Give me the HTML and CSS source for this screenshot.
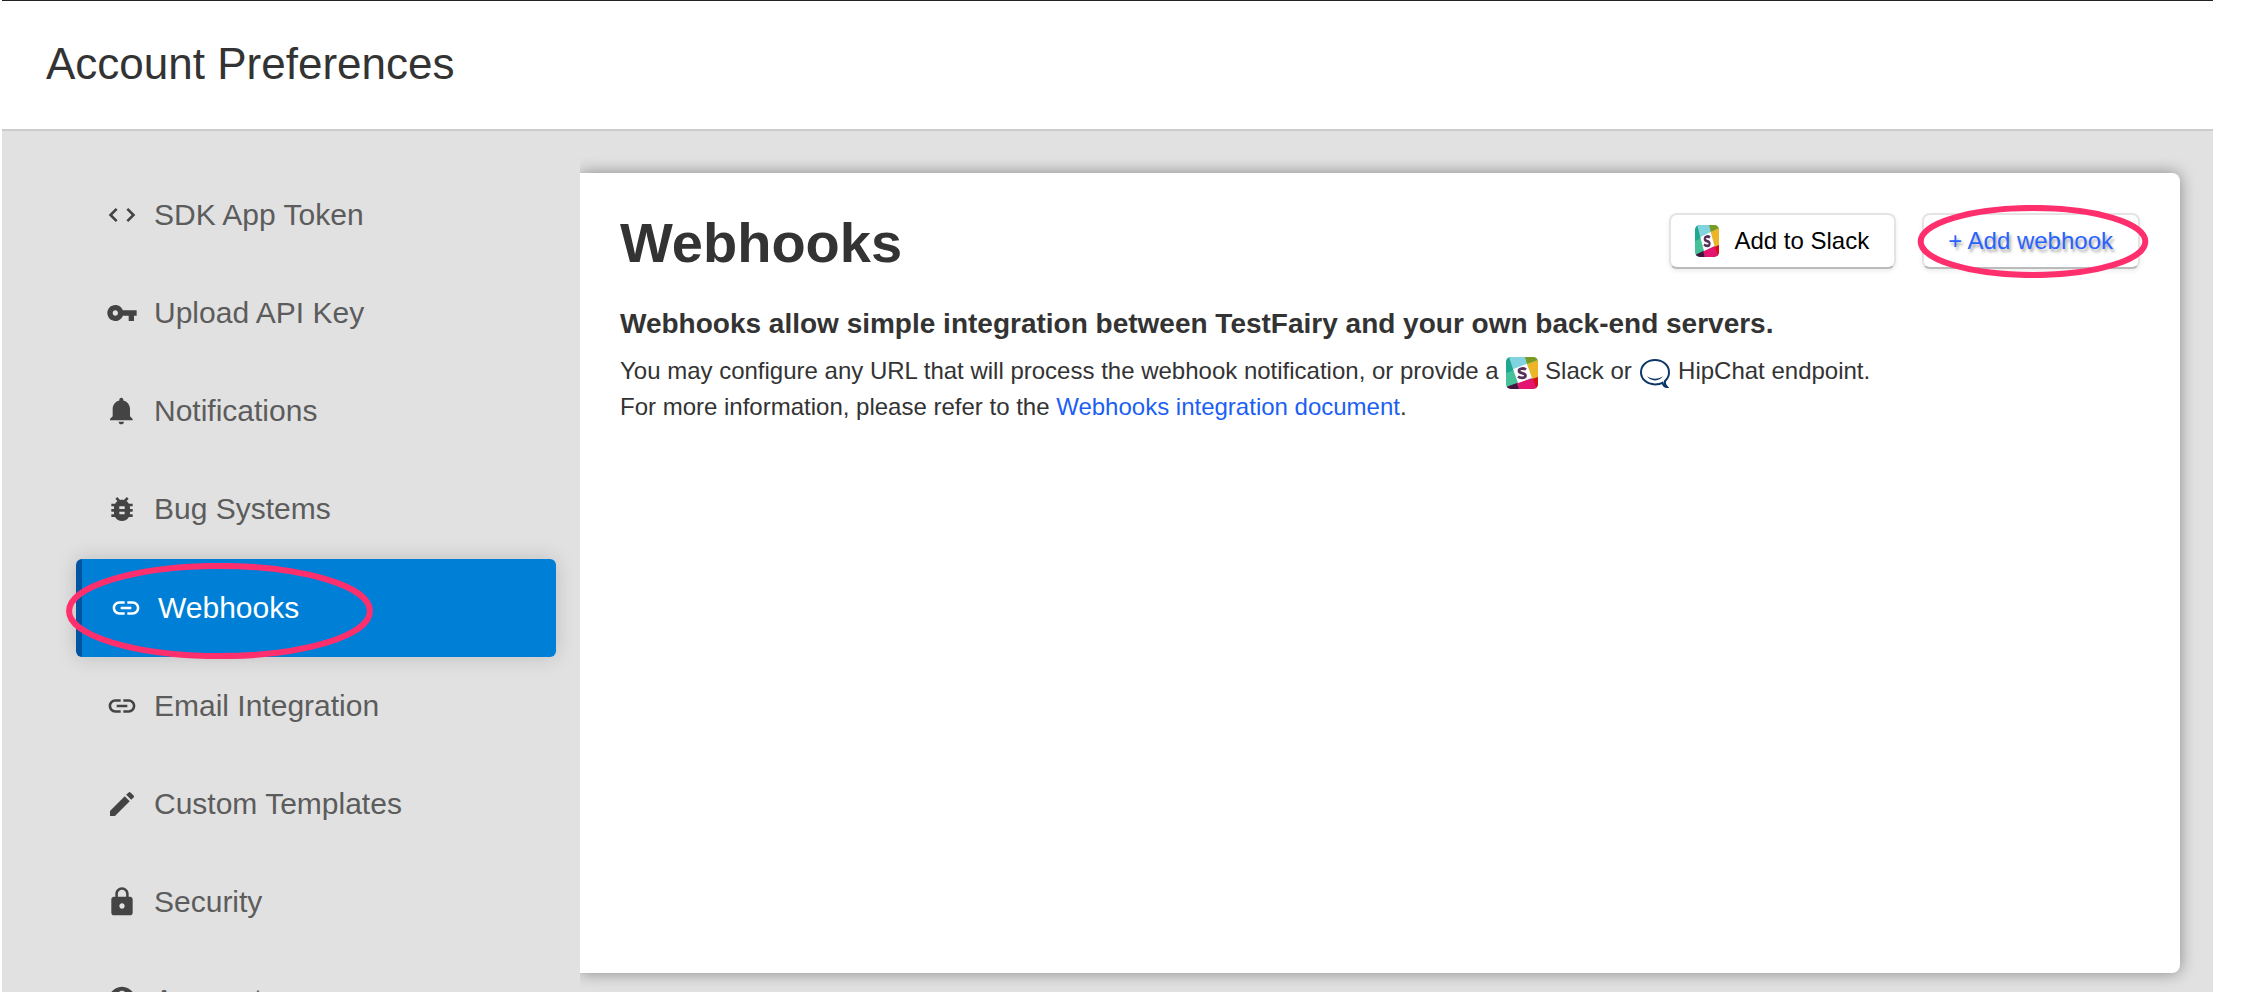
FILE: index.html
```html
<!DOCTYPE html>
<html lang="en">
<head>
<meta charset="utf-8">
<title>Account Preferences</title>
<link rel="stylesheet" href="styles.css">
</head>
<body>
<svg class="sprite" aria-hidden="true">
  <symbol id="slack" viewBox="0 0 32 32" preserveAspectRatio="none">
    <rect width="32" height="32" fill="#46c19a"/>
    <path d="M0 0H4L9 13 0 16Z" fill="#1fa88f"/>
    <path d="M3 0H19L22 7 7 12Z" fill="#82d3e0"/>
    <path d="M19 0H32V3L21 7Z" fill="#7a9a22"/>
    <path d="M21 7L32 3V20L26 22Z" fill="#ecb427"/>
    <path d="M26 22L32 20V32H29Z" fill="#d90d17"/>
    <path d="M11 26L26 21 31 32H13Z" fill="#e5156f"/>
    <path d="M0 30L11 26 13 32H0Z" fill="#44143f"/>
    <path d="M7 12L21 7 26 21 12 26Z" fill="#fff"/>
    <path d="M20 12.500C18 11 13 11 13 14 13 17 19.500 15.300 19.500 18.500 19.500 21.500 14.500 21.500 12 19.500" fill="none" stroke="#57305a" stroke-width="2.800"/>
  </symbol>
  <symbol id="link" viewBox="0 0 24 24"><path d="M3.900 12c0-1.710 1.390-3.100 3.100-3.100h4V7H7c-2.760 0-5 2.240-5 5s2.240 5 5 5h4v-1.900H7c-1.710 0-3.100-1.390-3.100-3.100zM8 13h8v-2H8v2zm9-6h-4v1.900h4c1.710 0 3.100 1.390 3.100 3.100s-1.390 3.100-3.100 3.100h-4V17h4c2.760 0 5-2.240 5-5s-2.240-5-5-5z"/></symbol>
</svg>
<div class="page">
  <header class="header"><h1 class="header-title">Account Preferences</h1></header>
  <div class="layout">
    <nav class="nav" aria-label="Account">
      <a class="nav-item" href="#sdk"><svg class="nav-icon" viewBox="0 0 24 24"><path d="M8.700 15.900L4.800 12l3.900-3.900L7.300 6.700 2 12l5.300 5.300zm6.600 0l3.900-3.900-3.900-3.900 1.400-1.400L22 12l-5.300 5.300z"/></svg>SDK App Token</a>
      <a class="nav-item" href="#key"><svg class="nav-icon" viewBox="0 0 24 24"><path d="M12.650 10C11.830 7.670 9.610 6 7 6c-3.310 0-6 2.690-6 6s2.690 6 6 6c2.610 0 4.830-1.670 5.650-4H17v4h4v-4h2v-4H12.650zM7 14c-1.100 0-2-.900-2-2s.900-2 2-2 2 .900 2 2-.900 2-2 2z"/></svg>Upload API Key</a>
      <a class="nav-item" href="#notifications"><svg class="nav-icon" viewBox="0 0 24 24"><path d="M11.500 22c1.100 0 2-.900 2-2h-4c0 1.100.900 2 2 2zm6.500-6v-5.500c0-3.070-2.130-5.640-5-6.320V3.500c0-.830-.670-1.500-1.500-1.500S10 2.670 10 3.500v.680c-2.870.680-5 3.250-5 6.320V16l-2 2v1h17v-1l-2-2z"/></svg>Notifications</a>
      <a class="nav-item" href="#bugs"><svg class="nav-icon" viewBox="0 0 24 24"><path d="M20 8h-2.810c-.450-.780-1.070-1.450-1.820-1.960L17 4.410 15.590 3l-2.170 2.170C12.960 5.060 12.490 5 12 5s-.960.060-1.410.170L8.410 3 7 4.410l1.620 1.630C7.880 6.550 7.260 7.220 6.810 8H4v2h2.090c-.050.330-.090.660-.090 1v1H4v2h2v1c0 .340.040.670.090 1H4v2h2.810c1.040 1.790 2.970 3 5.190 3s4.150-1.210 5.190-3H20v-2h-2.090c.050-.330.090-.660.090-1v-1h2v-2h-2v-1c0-.340-.040-.670-.090-1H20V8zm-6 8h-4v-2h4v2zm0-4h-4v-2h4v2z"/></svg>Bug Systems</a>
      <a class="nav-item nav-item-active" href="#webhooks" aria-current="page"><svg class="nav-icon"><use href="#link"/></svg>Webhooks
        <svg class="ring ring-nav" aria-hidden="true"><ellipse cx="50%" cy="50%" rx="49%" ry="47%"/></svg></a>
      <a class="nav-item" href="#email"><svg class="nav-icon"><use href="#link"/></svg>Email Integration</a>
      <a class="nav-item" href="#templates"><svg class="nav-icon" viewBox="0 0 24 24"><path d="M3 17.250V21h3.750L17.810 9.940l-3.750-3.750L3 17.250zM20.710 7.040a.996.996 0 0 0 0-1.410l-2.340-2.340a.996.996 0 0 0-1.410 0l-1.830 1.830 3.750 3.750 1.830-1.830z"/></svg>Custom Templates</a>
      <a class="nav-item" href="#security"><svg class="nav-icon" viewBox="0 0 24 24"><path d="M18 8h-1V6c0-2.760-2.240-5-5-5S7 3.240 7 6v2H6c-1.100 0-2 .900-2 2v10c0 1.100.900 2 2 2h12c1.100 0 2-.900 2-2V10c0-1.100-.900-2-2-2zm-6 9c-1.100 0-2-.900-2-2s.900-2 2-2 2 .900 2 2-.900 2-2 2zm3.100-9H8.900V6c0-1.710 1.390-3.100 3.100-3.100 1.710 0 3.100 1.390 3.100 3.100v2z"/></svg>Security</a>
      <a class="nav-item" href="#account"><svg class="nav-icon" viewBox="0 0 24 24"><path d="M12 2C6.480 2 2 6.480 2 12s4.480 10 10 10 10-4.480 10-10S17.520 2 12 2zm0 3c1.660 0 3 1.340 3 3s-1.340 3-3 3-3-1.340-3-3 1.340-3 3-3z"/></svg>Account</a>
    </nav>
    <main class="panel">
      <div class="panel-head">
        <h2 class="panel-title">Webhooks</h2>
        <div class="actions">
          <button class="btn" type="button"><svg class="btn-slack" aria-hidden="true"><use href="#slack"/></svg>Add to Slack</button>
          <button class="btn btn-link" type="button">+ Add webhook
            <svg class="ring ring-btn" aria-hidden="true"><ellipse cx="50%" cy="50%" rx="48%" ry="46%"/></svg></button>
        </div>
      </div>
      <h3 class="lead">Webhooks allow simple integration between TestFairy and your own back-end servers.</h3>
      <p class="copy">You may configure any URL that will process the webhook notification, or provide a <svg class="inline-icon" aria-hidden="true"><use href="#slack"/></svg> Slack or <svg class="inline-icon inline-chat" viewBox="0 0 32 32" aria-hidden="true"><path d="M23.500 25.800C21.500 27 18.800 27.400 16 27.400 8 27.400 2 22 2 15.200S8 3 16 3 30 8.400 30 15.200C30 18.700 28.500 21.700 26 24 25.500 26 26.300 28.300 28 30 26 30 24.200 28.400 23.500 25.800Z"/><path class="smile" d="M8 19.300C12.500 22.500 19.500 22.500 24 19.300 20.500 24.800 11.500 24.800 8 19.300Z"/></svg> HipChat endpoint.<br>For more information, please refer to the <a class="link" href="#docs">Webhooks integration document</a>.</p>
    </main>
  </div>
</div>
</body>
</html>
```
FILE: styles.css
```css
* { box-sizing: border-box; }
html { background: #fff; }
body {
  margin: 0;
  height: 100vh;
  overflow: hidden;
  font-family: "Liberation Sans", Arial, sans-serif;
  color: #333;
}
.sprite { position: absolute; width: 0; height: 0; }
.page {
  display: flex;
  flex-direction: column;
  min-height: 100vh;
  margin: 0 41px 0 2px;
  border-top: 1px solid #222;
}
.header {
  padding: 38px 44px 40px;
  border-bottom: 2px solid #ccc;
}
.header-title {
  margin: 0;
  font-size: 44px;
  line-height: 50px;
  font-weight: 400;
}
.layout {
  flex: 1;
  display: flex;
  align-items: flex-start;
  gap: 24px;
  padding: 35px 33px 0 74px;
  background: #e1e1e1;
}
.nav { flex: 0 0 480px; }
.nav-item {
  position: relative;
  display: flex;
  align-items: center;
  gap: 16px;
  height: 98px;
  padding-left: 30px;
  font-size: 30px;
  color: #5c5c5c;
  text-decoration: none;
}
.nav-icon { width: 32px; height: 32px; fill: #444; }
.nav-item-active {
  margin-top: 1px;
  padding-left: 28px;
  border-left: 6px solid #0054a0;
  border-radius: 6px;
  background: #007fd7;
  color: #fff;
  box-shadow: 0 0 20px rgba(0, 0, 0, .16);
}
.nav-item-active .nav-icon { fill: #fff; }
.ring {
  position: absolute;
  fill: none;
  stroke: #ff2f6e;
  stroke-width: 6px;
  pointer-events: none;
}
.ring-nav { left: -16px; top: 4px; width: 307px; height: 96px; }
.ring-btn { left: -8px; top: -10px; width: 234px; height: 73px; }
.panel {
  flex: 1;
  min-height: 800px;
  margin-top: 7px;
  padding: 38px 40px;
  border-radius: 0 8px 8px 0;
  background: #fff;
  box-shadow: 0 0 16px rgba(0, 0, 0, .4);
  clip-path: inset(-24px -24px -24px 0);
}
.panel-head {
  display: flex;
  justify-content: space-between;
  align-items: flex-start;
}
.panel-title { margin: 0; font-size: 56px; line-height: 64px; }
.actions { display: flex; gap: 26px; padding-top: 2px; }
.btn {
  position: relative;
  display: flex;
  align-items: center;
  gap: 15px;
  height: 56px;
  padding: 0 25px 0 24px;
  border: 2px solid #e4e4e4;
  border-bottom-color: #bbb;
  border-radius: 8px;
  background: #fff;
  font: 24px "Liberation Sans", Arial, sans-serif;
  color: #000;
  box-shadow: 0 2px 4px rgba(0, 0, 0, .08);
}
.btn-slack { width: 24px; height: 32px; border-radius: 5px; }
.btn-link { color: #2962ff; text-shadow: 2px 3px 3px rgba(0, 0, 0, .35); }
.lead { margin: 33px 0 0; font-size: 28px; line-height: 32px; }
.copy { margin: 13px 0 0; font-size: 24px; line-height: 36px; }
.inline-icon {
  width: 32px;
  height: 32px;
  margin-left: 1px;
  border-radius: 5px;
  vertical-align: middle;
}
.inline-chat { fill: none; stroke: #0b3768; stroke-width: 2px; }
.smile { fill: #0b3768; stroke: none; }
.link { color: #1d5ff2; text-decoration: none; }
```
